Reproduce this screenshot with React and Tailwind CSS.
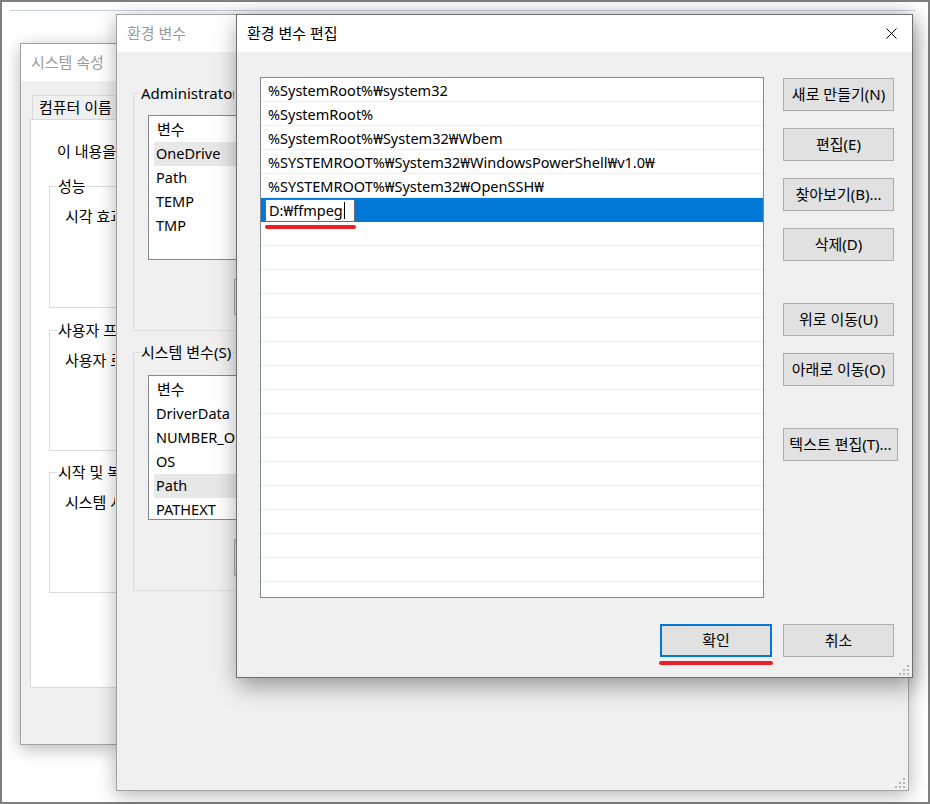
import React from 'react';

const FONT = "font-['Noto_Sans','Noto_Sans_CJK_KR',sans-serif]";

// Resize grip drawn at the bottom-right corner of a dialog
const Grip = ({ className }) => (
  <svg className={className} width="11" height="11" viewBox="0 0 11 11">
    <rect x="8" y="0" width="2" height="2" fill="#b5b5b5" />
    <rect x="4" y="4" width="2" height="2" fill="#b5b5b5" />
    <rect x="8" y="4" width="2" height="2" fill="#b5b5b5" />
    <rect x="0" y="8" width="2" height="2" fill="#b5b5b5" />
    <rect x="4" y="8" width="2" height="2" fill="#b5b5b5" />
    <rect x="8" y="8" width="2" height="2" fill="#b5b5b5" />
  </svg>
);

const WinButton = ({ children, className = '' }) => (
  <div
    className={`h-[33px] w-[111px] shrink-0 flex items-center justify-center bg-[#e1e1e1] border border-[#adadad] text-[15px] text-black whitespace-nowrap ${className}`}
  >
    {children}
  </div>
);

// ---- back window: 시스템 속성 (only its left strip shows) ----
const SystemProperties = () => {
  const groups = [
    { title: '성능', text: '시각 효과', mt: 'mt-[15px]', h: 'h-[132px]' },
    { title: '사용자 프로필', text: '사용자 로그인', mt: 'mt-[12px]', h: 'h-[131px]' },
    { title: '시작 및 복구', text: '시스템 시작', mt: 'mt-[11px]', h: 'h-[131px]' },
  ];
  return (
    <div className="absolute left-[20px] top-[43px] w-[97px] h-[702px] border border-[#a3a3a3] bg-[#f0f0f0] shadow-[0_4px_16px_rgba(0,0,0,0.28)] flex flex-col overflow-hidden">
      <div className="h-[37px] shrink-0 bg-white flex items-center pl-[10px] text-[15px] text-[#9a9a9a] whitespace-nowrap overflow-hidden">
        시스템 속성
      </div>
      <div className="flex mt-[14px] ml-[11px] overflow-hidden">
        <div className="h-[24px] px-[6px] border border-b-0 border-[#d9d9d9] flex items-center text-[15px] text-black whitespace-nowrap">
          컴퓨터 이름
        </div>
      </div>
      <div className="ml-[9px] w-[200px] h-[569px] shrink-0 bg-white border border-[#d9d9d9] flex flex-col pl-[26px] pt-[21px]">
        <div className="w-[60px] overflow-hidden text-[15px] leading-[20px] text-black whitespace-nowrap">
          이 내용을 변경
        </div>
        {groups.map((g) => (
          <fieldset
            key={g.title}
            className={`${g.mt} ml-[-8px] w-[160px] ${g.h} border border-[#dcdcdc]`}
          >
            <legend className="ml-[7px] px-[1px] max-w-[60px] overflow-hidden whitespace-nowrap text-[15px] leading-[20px] text-black">
              {g.title}
            </legend>
            <div className="mt-[10px] ml-[15px] w-[50px] overflow-hidden text-[15px] leading-[20px] text-black whitespace-nowrap">
              {g.text}
            </div>
          </fieldset>
        ))}
      </div>
    </div>
  );
};

// ---- middle window: 환경 변수 ----
const VarList = ({ items, selected }) => (
  <div className="ml-[14px] w-[110px] h-[145px] bg-white border border-[#828790] overflow-hidden">
    <div className="h-[26px] flex items-center pl-[8px] text-[15px] text-black">변수</div>
    {items.map((name) => (
      <div
        key={name}
        className={`h-[24px] ml-[5px] flex items-center pl-[2px] text-[14.5px] text-black whitespace-nowrap overflow-hidden ${
          name === selected ? 'bg-[#e8e8e8]' : ''
        }`}
      >
        {name}
      </div>
    ))}
  </div>
);

const EnvVariables = () => (
  <div className="absolute left-[116px] top-[14px] w-[793px] h-[777px] border border-[#a3a3a3] bg-[#f0f0f0] shadow-[0_4px_18px_rgba(0,0,0,0.3)] flex flex-col">
    <div className="h-[37px] shrink-0 bg-white flex items-center pl-[10px] text-[15px] text-[#9a9a9a]">
      환경 변수
    </div>
    <div className="flex flex-col pl-[16px]">
      <fieldset className="mt-[31px] w-[757px] h-[248px] border border-[#dcdcdc]">
        <legend className="ml-[6px] px-[1px] max-w-[94px] overflow-hidden whitespace-nowrap text-[15px] leading-[20px] text-black">
          Administrator의 사용자 변수(U)
        </legend>
        <div className="mt-[12px]">
          <VarList items={['OneDrive', 'Path', 'TEMP', 'TMP']} selected="OneDrive" />
        </div>
        <div className="flex ml-[100px] mt-[19px]">
          <div className="h-[36px] w-[20px] bg-[#e1e1e1] border border-[#adadad]" />
        </div>
      </fieldset>
      <fieldset className="mt-[11px] w-[757px] h-[249px] border border-[#dcdcdc]">
        <legend className="ml-[6px] px-[1px] max-w-[94px] overflow-hidden whitespace-nowrap text-[15px] leading-[20px] text-black">
          시스템 변수(S)
        </legend>
        <div className="mt-[13px]">
          <VarList
            items={['DriverData', 'NUMBER_OF_PROCESSORS', 'OS', 'Path', 'PATHEXT']}
            selected="Path"
          />
        </div>
        <div className="flex ml-[100px] mt-[19px]">
          <div className="h-[37px] w-[20px] bg-[#e1e1e1] border border-[#adadad]" />
        </div>
      </fieldset>
    </div>
    <Grip className="absolute right-[2px] bottom-[1px]" />
  </div>
);

// ---- front window: 환경 변수 편집 ----
const paths = [
  '%SystemRoot%₩system32',
  '%SystemRoot%',
  '%SystemRoot%₩System32₩Wbem',
  '%SYSTEMROOT%₩System32₩WindowsPowerShell₩v1.0₩',
  '%SYSTEMROOT%₩System32₩OpenSSH₩',
];

const EditEnvVariable = () => (
  <div className="absolute left-[236px] top-[14px] w-[677px] h-[664px] border border-[#6f6f6f] bg-[#f0f0f0] shadow-[2px_8px_22px_rgba(0,0,0,0.38)] flex flex-col">
    <div className="h-[37px] shrink-0 bg-white flex items-center justify-between pl-[10px] pr-[15px]">
      <span className="text-[15px] text-black">환경 변수 편집</span>
      <svg width="11" height="11" viewBox="0 0 11 11">
        <path d="M0.5 0.5 L10.5 10.5 M10.5 0.5 L0.5 10.5" stroke="#000" strokeWidth="1" />
      </svg>
    </div>

    <div className="flex flex-col pl-[23px] pr-[18px]">
      <div className="flex gap-[19px] mt-[25px]">
        {/* path list */}
        <div className="relative w-[504px] h-[521px] shrink-0 bg-white border border-[#828790] overflow-hidden">
          {paths.map((p) => (
            <div key={p} className="h-[24px] border-b border-[#f0f0f0] flex items-center pl-[7px] pt-[2px] text-[14.5px] text-black whitespace-nowrap">
              {p}
            </div>
          ))}
          <div className="h-[24px] bg-[#0078d7] flex items-center pl-[4px]">
            <div className="h-[23px] w-[90px] bg-white border border-[#6b6b6b] flex items-center pl-[3px] pt-[1px] text-[14.5px] text-black">
              D:₩ffmpeg
              <span className="inline-block w-px h-[17px] bg-black ml-[1px]" />
            </div>
          </div>
          {Array.from({ length: 15 }).map((_, i) => (
            <div key={i} className="h-[24px] border-b border-[#f0f0f0]" />
          ))}
          {/* red annotation underline */}
          <div className="absolute left-[4px] top-[147px] w-[91px] h-[4px] rounded-full bg-[#e8202a]" />
        </div>

        {/* side buttons */}
        <div className="w-[111px] shrink-0 flex flex-col items-start pt-[1px]">
          <WinButton>새로 만들기(N)</WinButton>
          <WinButton className="mt-[17px]">편집(E)</WinButton>
          <WinButton className="mt-[17px]">찾아보기(B)...</WinButton>
          <WinButton className="mt-[17px]">삭제(D)</WinButton>
          <WinButton className="mt-[42px]">위로 이동(U)</WinButton>
          <WinButton className="mt-[17px]">아래로 이동(O)</WinButton>
          <WinButton className="mt-[42px] w-[115px]">텍스트 편집(T)...</WinButton>
        </div>
      </div>

      <div className="flex justify-end gap-[11px] mt-[26px]">
        <div className="relative">
          <div className="h-[33px] w-[112px] flex items-center justify-center bg-[#e1e1e1] border-2 border-[#0078d7] text-[15px] text-black">
            확인
          </div>
          <div className="absolute left-[-1px] top-[37px] w-[114px] h-[4px] rounded-full bg-[#e8202a]" />
        </div>
        <WinButton>취소</WinButton>
      </div>
    </div>
    <Grip className="absolute right-[2px] bottom-[1px]" />
  </div>
);

export default function App() {
  return (
    <div
      className={`relative w-[930px] h-[804px] overflow-hidden bg-white shadow-[inset_0_0_0_2px_#7f7f7f] ${FONT}`}
    >
      {/* far backdrop window edge */}
      <div className="absolute left-[10px] top-[10px] w-[906px] h-px bg-[#c9d2de]" />
      <SystemProperties />
      <EnvVariables />
      <EditEnvVariable />
    </div>
  );
}
